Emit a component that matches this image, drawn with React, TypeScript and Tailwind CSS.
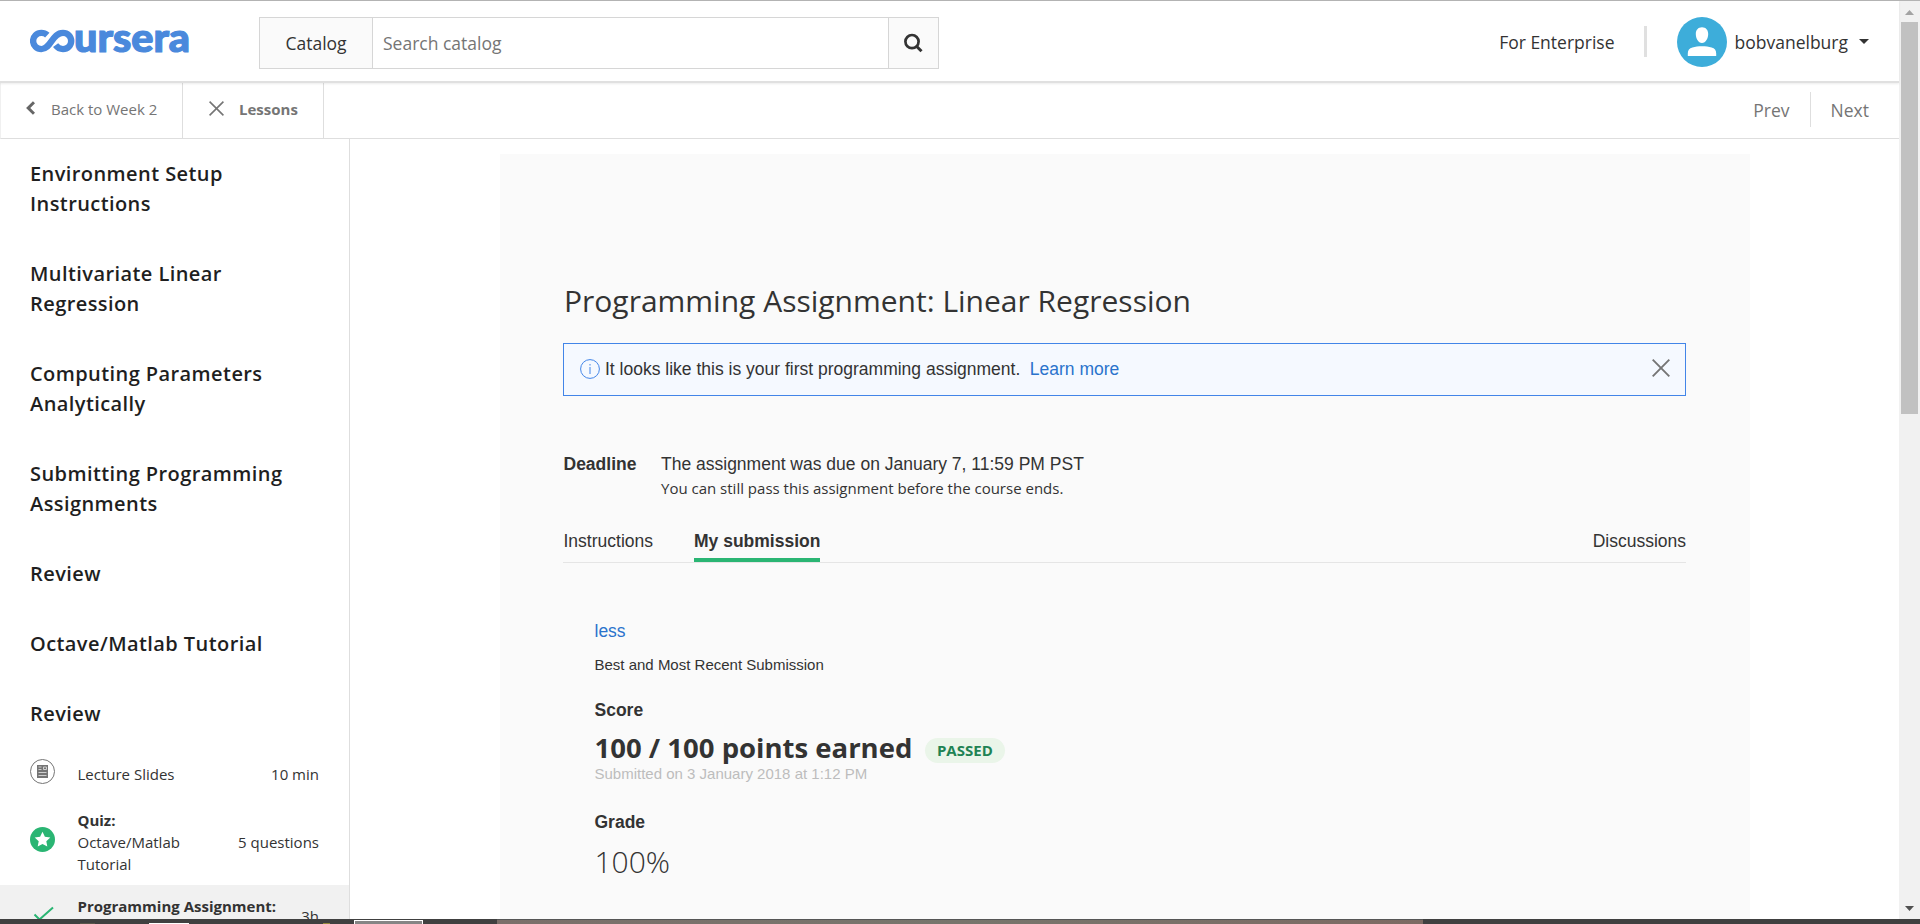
import React from "react";

const sections: string[][] = [
  ["Environment Setup", "Instructions"],
  ["Multivariate Linear", "Regression"],
  ["Computing Parameters", "Analytically"],
  ["Submitting Programming", "Assignments"],
  ["Review"],
  ["Octave/Matlab Tutorial"],
  ["Review"],
];

function Logo() {
  return (
    <svg width="170" height="56" viewBox="0 -14 170 56" role="img" aria-label="coursera">
      <path
        d="M17.300 7.200C15.600 5.600 13.600 4.900 11.400 4.900 6.800 4.900 3.100 8.500 3.100 13s3.700 8.100 8.300 8.100C21 21.100 22 4.900 33 4.900c4.600 0 8.200 3.600 8.200 8.100s-3.600 8.100-8.200 8.100c-3.500 0-5.700-1.600-7.400-3.900"
        fill="none"
        stroke="#4a89dc"
        strokeWidth="6.400"
      />
      <text x="44" y="23.700" fontFamily="Lato" fontWeight="900" fontSize="39" textLength="116" lengthAdjust="spacingAndGlyphs" fill="#4a89dc" stroke="#4a89dc" strokeWidth="1.200">
        ursera
      </text>
    </svg>
  );
}

function Cross({ size, stroke }: { size: number; stroke: number }) {
  return (
    <svg width={size} height={size} viewBox="0 0 18 18" fill="none" stroke="#757575" strokeWidth={stroke}>
      <path d="M.7.7 17.300 17.300M17.300.7.7 17.300" />
    </svg>
  );
}

function Header() {
  return (
    <header className="relative z-10 flex h-[82px] shrink-0 items-start border-b-2 border-[#e0e0e0] bg-white shadow-[0_1px_2px_rgba(0,0,0,0.08)]">
      <div className="ml-[30px] mt-[13px]">
        <Logo />
      </div>
      <div className="ml-[59px] mt-4 flex h-[52px] w-[680px] border border-[#d6d6d6] text-[17.5px]">
        <div className="flex w-[113px] items-center justify-center border-r border-[#d6d6d6] bg-[#fafafa] text-[#333]">Catalog</div>
        <div className="flex flex-1 items-center pl-[10px] text-[#757575]">Search catalog</div>
        <div className="flex w-[50px] items-center justify-center border-l border-[#d6d6d6] bg-[#fafafa]">
          <svg width="20" height="20" viewBox="0 0 20 20" fill="none" stroke="#333" className="mr-0.5">
            <circle cx="9" cy="8.600" r="6.600" strokeWidth="2.700" />
            <path d="M13.500 13.200 18.500 18.200" strokeWidth="3" />
          </svg>
        </div>
      </div>
      <div className="ml-auto flex h-[82px] items-start text-[17.5px] text-[#333]">
        <span className="mt-[29px] leading-[24px]">For Enterprise</span>
        <span className="ml-[29px] mt-[25px] h-[31px] w-[3px] bg-[#e0e0e0]" />
        <svg width="50" height="50" viewBox="0 0 50 50" className="ml-[30px] mt-4">
          <circle cx="25" cy="25" r="25" fill="#3dadda" />
          <path d="M25 10.300c3.900 0 6.200 2.800 6.200 6.700 0 4.300-2.400 9-6.200 9s-6.200-4.700-6.200-9c0-3.900 2.300-6.700 6.200-6.700ZM10.800 39v-2.500c0-3.500 1.500-5.200 4.600-6 2.800-.800 6-1.200 9.600-1.200s6.800.4 9.600 1.200c3.100.8 4.600 2.500 4.600 6V39Z" fill="#fff" />
        </svg>
        <span className="ml-[8px] mt-[29px] leading-[24px]">bobvanelburg</span>
        <svg width="10" height="5" viewBox="0 0 10 5" className="ml-[11px] mr-[30px] mt-[38px]">
          <path d="M0 0h10L5 5Z" fill="#333" />
        </svg>
      </div>
    </header>
  );
}

function LessonNav() {
  return (
    <nav className="flex h-[56px] shrink-0 border-b border-l border-b-[#dedede] border-l-[#f0f0f0] bg-white text-[#757575]">
      <div className="flex w-[182px] border-r border-[#dedede] text-[15px]">
        <svg width="9" height="14" viewBox="0 0 9 14" fill="none" stroke="#666" strokeWidth="3" className="ml-[25px] mt-[18px]">
          <path d="M8 1.200 2.200 7 8 12.800" />
        </svg>
        <span className="ml-4 mt-[15px] leading-[22px]">Back to Week 2</span>
      </div>
      <div className="flex w-[141px] border-r border-[#dedede]">
        <span className="ml-[26px] mt-[18px]">
          <Cross size={15} stroke={1.9} />
        </span>
        <span className="ml-[15px] mt-[15px] text-[15px] leading-[22px] font-bold">Lessons</span>
      </div>
      <div className="ml-auto mt-[9px] flex h-[35px] text-[17.5px] leading-[37px]">
        <span className="pr-5">Prev</span>
        <span className="border-l border-[#dedede] pr-[30px] pl-5">Next</span>
      </div>
    </nav>
  );
}

function Sidebar() {
  return (
    <aside className="flex w-[350px] shrink-0 flex-col border-r border-[#dedede]">
      {sections.map((lines, i) => (
        <h2 key={i} className="shrink-0 py-5 pl-[30px] text-[20px] leading-[30px] font-semibold tracking-[0.42px] text-[#1f1f1f]">
          {lines.map((l) => (
            <span key={l} className="block whitespace-nowrap">
              {l}
            </span>
          ))}
        </h2>
      ))}
      <div className="flex h-[50px] shrink-0 items-center pr-[30px] pl-[30px] text-[15px] leading-[22px] text-[#333]">
        <svg width="25" height="25" viewBox="0 0 25 25" className="relative -top-[3px] mr-[22.5px]">
          <circle cx="12.500" cy="12.500" r="12" fill="none" stroke="#757575" />
          <path d="M7 6h11v13H7Z" fill="#757575" />
          <path d="M8.500 8h3M8.500 10.500h3M13.500 8h3v2.500h-3ZM8.500 13.500h8M8.500 16.500h8" stroke="#d0d0d0" fill="none" />
        </svg>
        <span>Lecture Slides</span>
        <span className="ml-auto">10 min</span>
      </div>
      <div className="flex h-[86px] shrink-0 items-center pr-[30px] pl-[30px] text-[15px] leading-[22px] text-[#333]">
        <svg width="25" height="25" viewBox="0 0 25 25" className="relative -top-[3px] mr-[22.5px]">
          <circle cx="12.500" cy="12.500" r="12.500" fill="#2ab573" />
          <path d="m12.500 4.700 2.400 5 5.400.7-4 3.800 1 5.400-4.800-2.600-4.800 2.600 1-5.400-4-3.800 5.400-.7Z" fill="#fff" />
        </svg>
        <span className="w-[130px]">
          <b className="block font-bold">Quiz:</b>
          Octave/Matlab Tutorial
        </span>
        <span className="ml-auto">5 questions</span>
      </div>
      <div className="flex h-16 shrink-0 items-start bg-[#f1f1f1] pt-2.5 pr-[30px] pl-[30px] text-[15px] leading-[22px] text-[#333]">
        <svg width="25" height="25" viewBox="0 0 25 25" className="mr-[22.5px] mt-[7px]" fill="none" stroke="#2ab573" strokeWidth="2">
          <path d="M4.500 12.500 9.500 17.500 23 5.500" />
        </svg>
        <b className="font-bold whitespace-nowrap">Programming Assignment:</b>
        <span className="mt-[10px] ml-auto">3h</span>
      </div>
    </aside>
  );
}

function Assignment() {
  return (
    <main className="ml-[150px] mt-[15px] flex w-[1250px] shrink-0 flex-col bg-[#fafafa] pt-[127px] pr-[64px] pl-[63px] font-['Liberation_Sans',Arial,sans-serif] text-[17.5px] leading-[26px] text-[#333]">
      <h1 className="pl-px font-['Open_Sans',sans-serif] text-[30px] leading-[40px]">Programming Assignment: Linear Regression</h1>
      <div className="mt-[22px] flex h-[53px] shrink-0 border border-[#4285e8] bg-[#f5f9ff]">
        <svg width="20" height="20" viewBox="0 0 20 20" className="ml-4 mt-[15px]" fill="none" stroke="#4285e8">
          <circle cx="10" cy="10" r="9.400" />
          <path d="M10 8v7M10 5v1.500" />
        </svg>
        <span className="ml-[5px] mt-[12px]">It looks like this is your first programming assignment.</span>
        <span className="ml-[9.5px] mt-[12px] text-[#2a73cc]">Learn more</span>
        <span className="mr-[15px] ml-auto mt-[15px]">
          <Cross size={18} stroke={1.9} />
        </span>
      </div>
      <div className="mt-[55px] flex">
        <b className="w-[98px] pl-[0.5px] font-bold">Deadline</b>
        <div>
          <p>The assignment was due on January 7, 11:59 PM PST</p>
          <p className="font-['Open_Sans',sans-serif] text-[15px] leading-[22px]">You can still pass this assignment before the course ends.</p>
        </div>
      </div>
      <div className="mt-[29px] flex h-[35px] shrink-0 border-b border-[#e5e5e5]">
        <span className="w-[131px] pl-[0.5px]">Instructions</span>
        <span className="border-b-4 border-[#2ab573] font-bold">My submission</span>
        <span className="ml-auto">Discussions</span>
      </div>
      <div className="mt-[55px] flex flex-col pl-[31.5px]">
        <span className="text-[#2a73cc]">less</span>
        <span className="mt-2.5 text-[15px] leading-[22px]">Best and Most Recent Submission</span>
        <b className="mt-[21px] font-bold">Score</b>
        <div className="mt-2 flex h-8 items-start font-['Open_Sans',sans-serif]">
          <span className="text-[27.5px] leading-[34px] font-bold">100 / 100 points earned</span>
          <span className="ml-[12.5px] mt-[7px] h-[25px] w-20 rounded-full bg-[#eaf5e9] text-center text-[15px] leading-[25px] font-bold text-[#1f8354]">PASSED</span>
        </div>
        <span className="text-[15px] leading-[22px] text-[#bdbdbd]">Submitted on 3 January 2018 at 1:12 PM</span>
        <b className="mt-6 font-bold">Grade</b>
        <span className="mt-[7px] font-['Open_Sans',sans-serif] text-[30px] leading-[40px] font-light">100%</span>
      </div>
    </main>
  );
}

export default function App() {
  return (
    <div className="flex h-[924px] w-[1920px] flex-col overflow-hidden border-t border-[#b3b3b3] bg-white font-['Open_Sans',sans-serif]">
      <div className="flex h-[918px] shrink-0 overflow-hidden">
        <div className="flex w-[1899px] flex-col">
          <Header />
          <LessonNav />
          <div className="flex min-h-0 flex-1 overflow-hidden">
            <Sidebar />
            <Assignment />
          </div>
        </div>
        <div className="flex w-[21px] flex-col items-center bg-[#f1f1f1]">
          <svg width="9" height="5" viewBox="0 0 9 5" className="mt-[9px] shrink-0">
            <path d="M4.500 0 9 5H0Z" fill="#a3a3a3" />
          </svg>
          <div className="mt-[7px] h-[392px] w-[17px] shrink-0 bg-[#c1c1c1]" />
          <svg width="9" height="5" viewBox="0 0 9 5" className="mt-auto mb-2 shrink-0">
            <path d="M0 0h9L4.500 5Z" fill="#505050" />
          </svg>
        </div>
      </div>
      <div className="flex h-[5px] shrink-0 items-end bg-[#404040]">
        <span className="ml-[80px] h-px w-[15px] bg-[#5a564b]" />
        <span className="ml-[54px] h-px w-[40px] bg-white" />
        <span className="ml-[134px] h-px w-[7px] bg-[#94893c]" />
        <span className="ml-[24px] h-1 w-[69px] border-x border-t border-white bg-[#858585]" />
        <span className="ml-[74px] h-[5px] w-[926px] border-t border-[#555] bg-gradient-to-r from-[#7b6f6a] via-[#77756c] to-[#7d6a63]" />
      </div>
    </div>
  );
}
